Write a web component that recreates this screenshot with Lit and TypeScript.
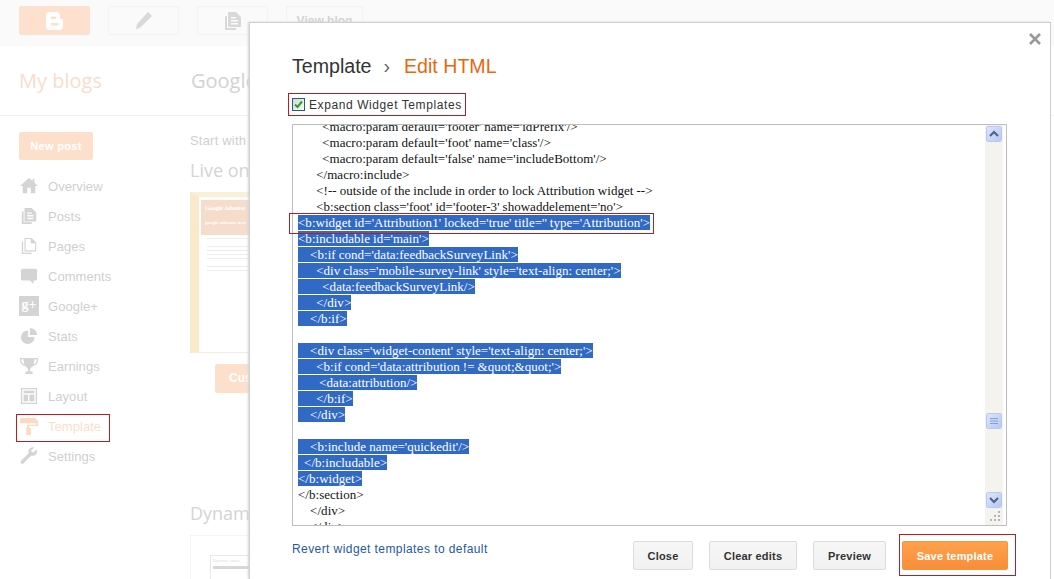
import { LitElement, html, css, svg } from "lit";
import { customElement } from "lit/decorators.js";

const nav: [string, string][] = [
  ["Overview", "home"], ["Posts", "posts"], ["Pages", "pages"], ["Comments", "comment"], ["Google+", "gplus"],
  ["Stats", "pie"], ["Earnings", "trophy"], ["Layout", "layout"], ["Template", "roller"], ["Settings", "wrench"],
];

const icons: Record<string, any> = {
  home: svg`<path d="M10 1 L14 4.5 V2 H16 V6.3 L20 10 H17 V18 H12 V12 H8 V18 H3 V10 H0 Z"/>`,
  posts: svg`<path d="M2 5 H4 V17 H13 V19 H2 Z"/><path fill-rule="evenodd" d="M5 1 H13 L18 6 V16 H5 Z M8 6 V7.5 H13 V6 Z M8 9 V10.5 H15 V9 Z M8 12 V13.5 H15 V12 Z"/>`,
  pages: svg`<path d="M2 5 H3.5 V17.5 H13 V19 H2 Z"/><path fill-rule="evenodd" d="M5 1 H13 L18 6 V16 H5 Z M6.3 2.3 V14.7 H16.7 V7 H12 V2.3 Z"/>`,
  comment: svg`<path d="M3 2 H17 Q19 2 19 4 V13 Q19 15 17 15 H15 V19 L11 15 H3 Q1 15 1 13 V4 Q1 2 3 2 Z"/>`,
  pie: svg`<path d="M9 4 V11 H16 A7.5 7.5 0 1 1 9 4 Z"/><path d="M11 1 A8 8 0 0 1 19 9 H11 Z"/>`,
  trophy: svg`<path fill-rule="evenodd" d="M0 1 H20 V4 Q20 9 13.5 10.5 Q11.5 12.5 11 14 V16 H14 V19 H6 V16 H9 V14 Q8.5 12.5 6.5 10.5 Q0 9 0 4 Z M1.5 2.5 V4 Q1.5 7 5 8.5 Q4 5.5 4 2.5 Z M18.5 2.5 H16 Q16 5.5 15 8.5 Q18.5 7 18.5 4 Z"/>`,
  layout: svg`<path fill-rule="evenodd" d="M1 1 H19 V19 H1 Z M2.5 2.5 V17.5 H17.5 V2.5 Z"/><rect x="4" y="4" width="12" height="3"/><rect x="4" y="8.5" width="5" height="7.5"/><rect x="10.5" y="8.5" width="5.5" height="7.5"/>`,
  roller: svg`<rect x="0" y="1" width="18" height="6" rx="1"/><path d="M18 3.5 H20 V10 H10 V12 H12 V20 H7 V12 H8 V8.5 H18 Z"/>`,
  wrench: svg`<path d="M18.5 2.5 L15 6 L13 5.5 L12.5 3.5 L16 0.5 Q12 -0.5 10 2.5 Q9 4.5 9.7 6.8 L1 15.5 Q0 17 1.2 18.2 Q2.7 19.2 4 18 L12.5 9.5 Q15.5 10.5 17.8 8.2 Q19.7 6 18.5 2.5 Z"/>`,
};

const code: [string, boolean][] = [
  ["        <macro:param default='footer' name='idPrefix'/>", false],
  ["        <macro:param default='foot' name='class'/>", false],
  ["        <macro:param default='false' name='includeBottom'/>", false],
  ["      </macro:include>", false],
  ["      <!-- outside of the include in order to lock Attribution widget -->", false],
  ["      <b:section class='foot' id='footer-3' showaddelement='no'>", false],
  ["<b:widget id='Attribution1' locked='true' title='' type='Attribution'>", true],
  ["<b:includable id='main'>", true],
  ["    <b:if cond='data:feedbackSurveyLink'>", true],
  ["      <div class='mobile-survey-link' style='text-align: center;'>", true],
  ["        <data:feedbackSurveyLink/>", true],
  ["      </div>", true],
  ["    </b:if>", true],
  ["", false],
  ["    <div class='widget-content' style='text-align: center;'>", true],
  ["      <b:if cond='data:attribution != &quot;&quot;'>", true],
  ["       <data:attribution/>", true],
  ["      </b:if>", true],
  ["    </div>", true],
  ["", false],
  ["    <b:include name='quickedit'/>", true],
  ["  </b:includable>", true],
  ["</b:widget>", true],
  ["</b:section>", false],
  ["    </div>", false],
  ["    </div>", false],
];

@customElement("app-root")
export class AppRoot extends LitElement {
  static styles = css`
    :host { display: block; width: 1054px; height: 579px; position: relative; overflow: hidden; background: #fff; font-family: "Liberation Sans", Arial, sans-serif; }
    .topbar { height: 46px; box-sizing: border-box; background: #fafafa; display: flex; gap: 18px; padding: 6px 19px 0; }
    .tb { box-sizing: border-box; width: 71px; height: 29px; border: 1px solid #f3f3f3; border-radius: 2px; display: flex; align-items: center; justify-content: center; fill: #d9d9d9; }
    .tb.logo { background: #fde1ce; border-color: #fde1ce; fill: #fff; }
    .tb.view { width: 77px; font-size: 12px; font-weight: bold; color: #d4d4d4; }
    .head { height: 70px; box-sizing: border-box; border-bottom: 1px solid #f1f1f1; display: grid; grid-template-columns: 172px 1fr; padding-left: 19px; font-family: "Open Sans", sans-serif; font-size: 20px; line-height: 30px; padding-top: 20px; }
    .head .blogs { color: #f9ddcc; }
    .head .gname { color: #d2d2d2; white-space: nowrap; }
    .body { display: grid; grid-template-columns: 190px 1fr; }
    .side { padding: 16px 0 0 19px; }
    .newpost { width: 74px; height: 28px; box-sizing: border-box; background: #fde0cc; border-radius: 2px; color: #fff; font-size: 11px; font-weight: bold; letter-spacing: 0.3px; display: flex; align-items: center; justify-content: center; margin-bottom: 11px; }
    .item { position: relative; display: flex; align-items: center; height: 30px; gap: 10px; margin-left: 1px; font-size: 13px; color: #cfcfcf; fill: #d4d4d4; letter-spacing: 0.05px; }
    .item svg { width: 18px; height: 18px; flex: none; }
    .item.on { color: #fbdfcc; fill: #fcd9bf; }
    .gp { width: 20px; height: 20px; margin-left: -1px; margin-right: -1px; flex: none; background: #d4d4d4; color: #fff; font: bold 14px/18px "Liberation Serif", serif; text-align: center; }
    .mk::after { content: ""; position: absolute; border: 1px solid #b91c22; pointer-events: none; }
    .item.on::after { left: -4px; top: 3px; width: 92px; height: 26px; }
    .main { padding-top: 15px; color: #cfcfcf; }
    .start { font-size: 13px; letter-spacing: 0.2px; line-height: 20px; white-space: nowrap; }
    .live { font-family: "Open Sans", sans-serif; font-size: 18px; line-height: 26px; margin-top: 6px; color: #d4d4d4; white-space: nowrap; }
    .thumb { margin-top: 9px; width: 120px; height: 161px; box-sizing: border-box; border: 1px solid #f3ecdf; border-left: 9px solid #f9e9c9; border-top: 5px solid #faf0d8; padding: 3px 0 0 2px; }
    .thumb .hd { height: 35px; background: #f6dccb; color: #fff; font: bold 5px/7px "Liberation Serif", serif; padding: 5px 4px; box-sizing: border-box; white-space: nowrap; }
    .thumb .hd b { display: block; font-size: 6px; margin-bottom: 7px; }
    .tl { height: 1px; background: #ececec; margin: 3px 0 0 6px; width: 100px; }
    .tl.s { width: 50px; margin-top: 7px; }
    .cust { margin: 11px 0 0 25px; width: 90px; height: 29px; border-radius: 2px; background: #fde0cc; color: #fff; font-size: 12px; font-weight: bold; padding-left: 14px; box-sizing: border-box; line-height: 29px; }
    .dyn { margin-top: 107px; font-family: "Open Sans", sans-serif; font-size: 18px; line-height: 26px; color: #d4d4d4; white-space: nowrap; }
    .dcard { margin-top: 9px; width: 120px; height: 60px; box-sizing: border-box; border: 1px solid #f5f5f5; padding: 19px 0 0 19px; }
    .dcard .bx { border: 1px solid #e8e8e8; height: 40px; font-size: 4px; color: #ddd; padding: 2px; }
    .dcard .dk { height: 3px; background: #d8d8d8; margin-top: 3px; }

    .dialog { position: absolute; left: 249px; top: 22px; width: 802px; height: 557px; box-sizing: border-box; background: #fff; border: 1px solid #d0d0d0; border-bottom: 0; box-shadow: -1px 0 2px #d4d4d4; padding: 28px 42px 0; display: flex; flex-direction: column; }
    .x { position: absolute; left: 779px; top: 10px; width: 12px; height: 12px; stroke: #999; stroke-width: 2.6; }
    h2 { margin: 0; font-weight: normal; font-size: 19.6px; line-height: 30px; color: #333; display: flex; }
    h2 .sep { margin: 0 14px 0 12px; color: #666; }
    h2 .cur { color: #e8680f; }
    .check { position: relative; display: flex; align-items: center; height: 23px; margin-top: 12px; font-size: 12px; color: #333; letter-spacing: 0.59px; gap: 4px; }
    .check::after { left: -4px; top: 0; width: 176px; height: 21px; }
    .cb { width: 13px; height: 13px; flex: none; box-sizing: border-box; border: 1px solid #2a5a7f; background: linear-gradient(135deg, #d8d8d2, #f8f8f6); display: flex; }
    .ta { margin-top: 8px; position: relative; width: 715px; height: 402px; box-sizing: border-box; border: 1px solid #bdbdbd; display: flex; }
    .wmark { position: absolute; left: -4px; top: 88px; width: 363px; height: 19px; border: 1px solid #b91c22; pointer-events: none; }
    .code { flex: 1; min-width: 0; overflow: hidden; padding-left: 5px; font-family: "Liberation Serif", serif; font-size: 13px; letter-spacing: 0.03px; word-spacing: -0.25px; color: #111; }
    .lines { margin-top: -6px; }
    .ln { height: 16px; line-height: 15px; white-space: pre; }
    .ln span { display: inline-block; height: 15px; }
    .ln .sel { background: #316ac5; color: #fff; }
    .sb { width: 18px; flex: none; margin-right: 3px; background: #f4f3ee; box-sizing: border-box; padding: 1px 1px 0; display: flex; flex-direction: column; }
    .sbtn { width: 16px; height: 16px; box-sizing: border-box; border: 1px solid #fff; border-radius: 2px; outline: 1px solid #b8c8ee; outline-offset: -1px; background: linear-gradient(135deg, #dbe5fd, #b5c8f5); stroke: #4d6185; fill: none; display: flex; align-items: center; justify-content: center; }
    .thumbbar { margin-top: 271px; margin-bottom: 63px; stroke: #8aa0cf; }
    .grip { position: absolute; right: 5px; bottom: 3px; width: 11px; height: 11px; fill: #b5b5b5; }
    .foot { display: flex; align-items: flex-start; gap: 16px; margin-top: 15px; }
    .revert { margin-right: auto; font-size: 12px; color: #1f5a9e; letter-spacing: 0.42px; line-height: 16px; }
    .btn { position: relative; box-sizing: border-box; height: 29px; border: 1px solid #dcdcdc; border-radius: 2px; background: linear-gradient(#f6f6f6, #f1f1f1); color: #333; font-size: 11px; font-weight: bold; letter-spacing: 0.2px; display: flex; align-items: center; justify-content: center; }
    .btn.close { width: 60px; }
    .btn.clear { width: 88px; }
    .btn.preview { width: 73px; }
    .btn.save { width: 106px; background: linear-gradient(#ffa24d, #f98d38); border-color: #f79440; color: #fff; }
    .btn.save::after { left: -4px; top: -8px; width: 115px; height: 40px; }
  `;

  private icon(name: string) {
    return html`<svg viewBox="0 0 20 20">${icons[name]}</svg>`;
  }

  render() {
    return html`
      <div class="topbar">
        <div class="tb logo"><svg width="20" height="20" viewBox="0 0 20 20"><path fill-rule="evenodd" d="M4 1 H11 Q15 1 15 5 V7 Q15 8 16 8 Q18 8 18 10 V15 Q18 19 14 19 H5 Q1 19 1 15 V4 Q1 1 4 1 Z M6 5.5 V8 H11 V5.5 Z M6 12 V14.5 H13.5 V12 Z"/></svg></div>
        <div class="tb"><svg width="20" height="20" viewBox="0 0 20 20"><path d="M14 1 L18 5 L7 16 L2 18.5 L3 13 Z"/></svg></div>
        <div class="tb"><svg width="20" height="20" viewBox="0 0 20 20">${icons.posts}</svg></div>
        <div class="tb view">View blog</div>
      </div>
      <div class="head"><div class="blogs">My blogs</div><div class="gname">Google Adsense</div></div>
      <div class="body">
        <div class="side">
          <div class="newpost">New post</div>
          ${nav.map(([label, ic]) => html`
            <div class="item ${label === "Template" ? "on mk" : ""}">
              ${ic === "gplus" ? html`<div class="gp">g+</div>` : this.icon(ic)}<span>${label}</span>
            </div>`)}
        </div>
        <div class="main">
          <div class="start">Start with</div>
          <div class="live">Live on blog</div>
          <div class="thumb">
            <div class="hd"><b>Google Adsense</b>google adsense new</div>
            <div class="tl"></div><div class="tl s"></div><div class="tl"></div><div class="tl"></div><div class="tl"></div><div class="tl s"></div><div class="tl"></div>
          </div>
          <div class="cust">Customize</div>
          <div class="dyn">Dynamic Views</div>
          <div class="dcard"><div class="bx">Dynamic views<div class="dk"></div></div></div>
        </div>
      </div>

      <div class="dialog">
        <svg class="x" viewBox="0 0 12 12"><path d="M1 1 L11 11 M11 1 L1 11"/></svg>
        <h2>Template<span class="sep">›</span><span class="cur">Edit HTML</span></h2>
        <label class="check mk">
          <span class="cb"><svg width="11" height="11" viewBox="0 0 11 11"><path d="M2 5.5 L4.5 8 L9 2.5" fill="none" stroke="#2ba02b" stroke-width="2"/></svg></span>
          Expand Widget Templates
        </label>
        <div class="ta">
          <div class="code"><div class="lines">
            ${code.map(([t, sel]) => html`<div class="ln"><span class=${sel ? "sel" : ""}>${t}</span></div>`)}
          </div></div>
          <div class="sb">
            <div class="sbtn"><svg width="10" height="8" viewBox="0 0 10 8"><path d="M1 6 L5 2 L9 6" stroke-width="2"/></svg></div>
            <div class="sbtn thumbbar"><svg width="8" height="8" viewBox="0 0 8 8"><path d="M0 1.5 H8 M0 4 H8 M0 6.5 H8" stroke-width="1"/></svg></div>
            <div class="sbtn"><svg width="10" height="8" viewBox="0 0 10 8"><path d="M1 2 L5 6 L9 2" stroke-width="2"/></svg></div>
          </div>
          <svg class="grip" viewBox="0 0 11 11"><rect x="8" y="0" width="2" height="2"/><rect x="4" y="4" width="2" height="2"/><rect x="8" y="4" width="2" height="2"/><rect x="0" y="8" width="2" height="2"/><rect x="4" y="8" width="2" height="2"/><rect x="8" y="8" width="2" height="2"/></svg>
          <div class="wmark"></div>
        </div>
        <div class="foot">
          <div class="revert">Revert widget templates to default</div>
          <div class="btn close">Close</div>
          <div class="btn clear">Clear edits</div>
          <div class="btn preview">Preview</div>
          <div class="btn save mk">Save template</div>
        </div>
      </div>
    `;
  }
}
